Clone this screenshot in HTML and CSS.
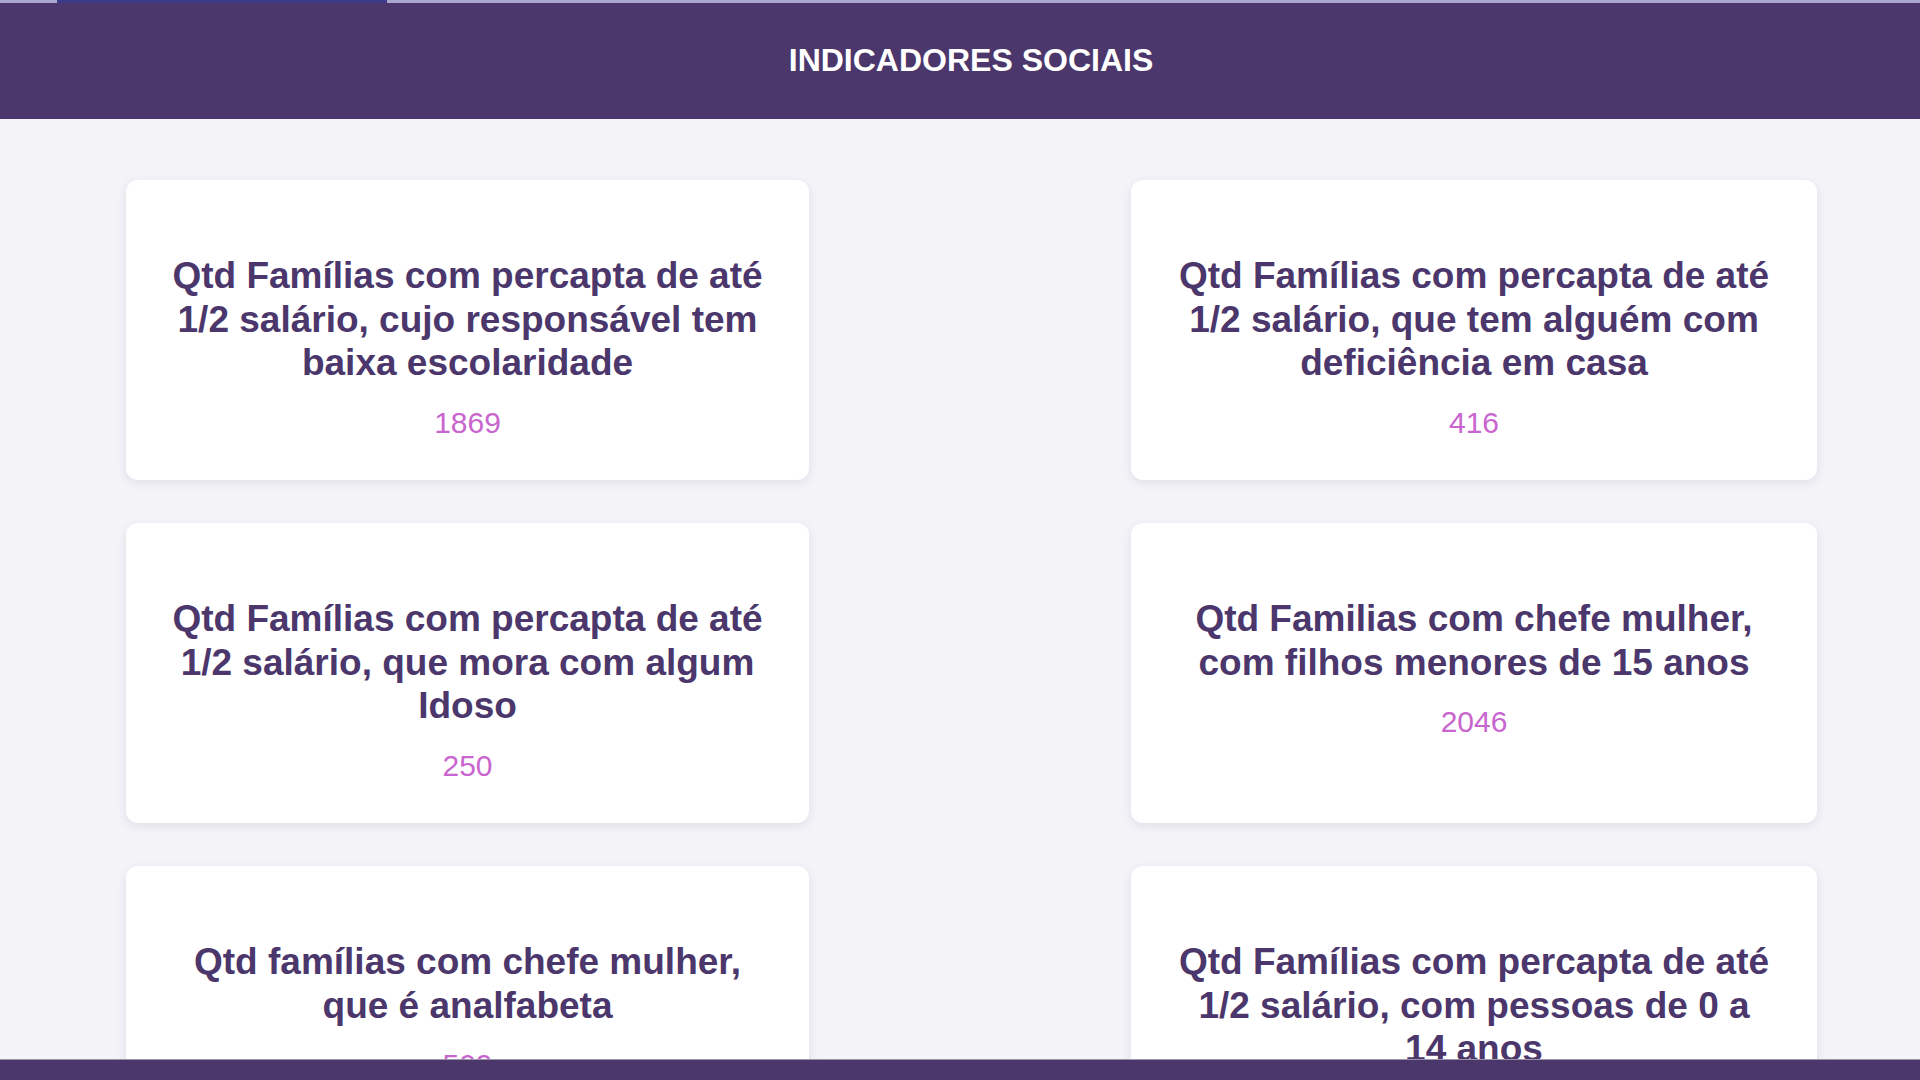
FILE: index.html
```html
<!DOCTYPE html>
<html lang="pt-BR">
<head>
    <meta charset="UTF-8">
    <meta name="viewport" content="width=device-width, initial-scale=1.0">
    <title>Indicadores Sociais</title>
    <link rel="stylesheet" href="styles.css">
</head>
<body>
    <div class="progress-track">
        <div class="progress-fill"></div>
    </div>

    <header class="page-header">
        <h1>INDICADORES SOCIAIS</h1>
    </header>

    <main class="indicators">
        <div class="card">
            <h2>Qtd Famílias com percapta de até 1/2 salário, cujo responsável tem baixa escolaridade</h2>
            <p class="card-value">1869</p>
        </div>
        <div class="card">
            <h2>Qtd Famílias com percapta de até 1/2 salário, que tem alguém com deficiência em casa</h2>
            <p class="card-value">416</p>
        </div>
        <div class="card">
            <h2>Qtd Famílias com percapta de até 1/2 salário, que mora com algum Idoso</h2>
            <p class="card-value">250</p>
        </div>
        <div class="card">
            <h2>Qtd Familias com chefe mulher, com filhos menores de 15 anos</h2>
            <p class="card-value">2046</p>
        </div>
        <div class="card">
            <h2>Qtd famílias com chefe mulher, que é analfabeta</h2>
            <p class="card-value">509</p>
        </div>
        <div class="card">
            <h2>Qtd Famílias com percapta de até 1/2 salário, com pessoas de 0 a 14 anos</h2>
            <p class="card-value">1320</p>
        </div>
    </main>

    <footer class="page-footer"></footer>
</body>
</html>
```

FILE: styles.css
```css
:root {
    --primary-color: #4b376b;
    --accent-color: #c965cf;
    --page-bg: #f4f3f8;
}

* {
    box-sizing: border-box;
    margin: 0;
    padding: 0;
    font-family: 'Liberation Sans', Arial, sans-serif;
}

html::-webkit-scrollbar {
    display: none;
}

body {
    background-color: var(--page-bg);
    color: var(--primary-color);
}

.progress-track {
    height: 3px;
    background-color: #aca7d0;
}

.progress-fill {
    margin-left: 57px;
    width: 330px;
    height: 100%;
    background-color: #3d3b88;
}

.page-header {
    height: 116px;
    background-color: var(--primary-color);
    display: flex;
    align-items: center;
    justify-content: center;
    padding-left: 22px;
    padding-bottom: 2px;
}

.page-header h1 {
    color: white;
    font-size: 32px;
    font-weight: bold;
}

.indicators {
    display: grid;
    grid-template-columns: 683px 686px;
    column-gap: 322px;
    row-gap: 43px;
    padding: 61px 0 60px 126px;
}

.card {
    height: 300px;
    padding: 74px 44px 0;
    background: white;
    border-radius: 12px;
    box-shadow: 0 3px 10px rgba(60, 50, 100, 0.1);
    text-align: center;
}

.card h2 {
    font-size: 37px;
    line-height: 43.5px;
    font-weight: bold;
    color: var(--primary-color);
}

.card-value {
    margin-top: 21px;
    font-size: 30px;
    line-height: 34px;
    color: var(--accent-color);
}

.page-footer {
    position: fixed;
    left: 0;
    right: 0;
    bottom: 0;
    height: 21px;
    background-color: var(--primary-color);
    border-top: 1px solid #9a98a8;
}
```
